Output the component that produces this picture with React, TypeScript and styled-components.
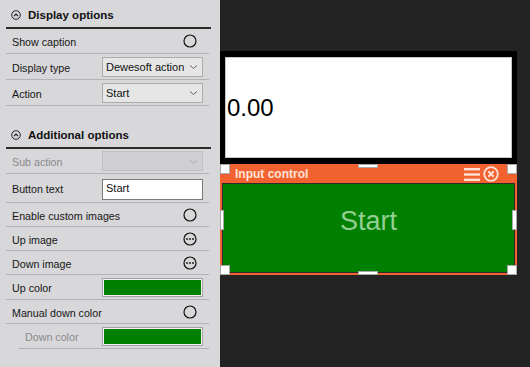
import React from "react";
import styled, { createGlobalStyle } from "styled-components";

const Global = createGlobalStyle`
  html, body { margin: 0; padding: 0; }
  body { width: 530px; height: 367px; overflow: hidden; background: #232323; }
  #root { width: 530px; height: 367px; }
`;

const Page = styled.div`
  display: flex;
  width: 530px;
  height: 367px;
  font-family: "Liberation Sans", Arial, sans-serif;
`;

const LeftPanel = styled.div`
  width: 220px;
  flex: none;
  background: #d8d7da;
  padding: 0 9px 0 6px;
  box-sizing: border-box;
  display: flex;
  flex-direction: column;
`;

const SectionHeader = styled.div<{ $top?: number }>`
  margin-top: ${(p) => p.$top ?? 0}px;
  border-bottom: 2px solid #2a2a2a;
  display: flex;
  align-items: center;
  gap: 7px;
  padding: 3px 0 0 5px;
  height: 24px;
  font-weight: bold;
  font-size: 11.5px;
  color: #111;
`;

const Row = styled.div<{ $h: number; $indent?: number }>`
  display: grid;
  grid-template-columns: ${(p) => 90 - (p.$indent ?? 0)}px 101px;
  align-items: center;
  height: ${(p) => p.$h}px;
  margin: 0 2px 0 ${(p) => p.$indent ?? 0}px;
  padding-left: 6px;
  border-bottom: 1px solid #b3b2b5;
  box-sizing: border-box;
`;

const Label = styled.span<{ $disabled?: boolean }>`
  font-size: 10.7px;
  padding-top: 2px;
  color: ${(p) => (p.$disabled ? "#8a898c" : "#161616")};
  white-space: nowrap;
`;

const SelectBox = styled.div<{ $disabled?: boolean }>`
  height: 20px;
  box-sizing: border-box;
  background: ${(p) => (p.$disabled ? "#cfced1" : "#e6e6e6")};
  border: 1px solid ${(p) => (p.$disabled ? "#c2c1c4" : "#acacac")};
  display: flex;
  align-items: center;
  justify-content: space-between;
  padding: 1px 4px 0 3px;
  font-size: 11px;
  color: #111;
`;

const TextInput = styled.div`
  height: 21px;
  box-sizing: border-box;
  background: #fff;
  border: 1px solid #7a7a7a;
  padding: 1px 3px 0;
  font-size: 11px;
  color: #111;
  line-height: 15px;
  align-self: start;
  margin-top: 5px;
`;

const Swatch = styled.div<{ $color: string }>`
  height: 19px;
  box-sizing: border-box;
  border: 1px solid #a2a1a4;
  padding: 1px;
  background: #f2f2f2;
  &::after {
    content: "";
    display: block;
    height: 100%;
    background: ${(p) => p.$color};
  }
`;

const IconSlot = styled.div`
  justify-self: end;
  margin-right: 6px;
  display: flex;
  align-items: center;
`;

const Canvas = styled.div`
  flex: 1;
  position: relative;
  background: #232323;
`;

const ValueWidget = styled.div`
  position: absolute;
  left: 0;
  top: 51px;
  width: 297px;
  height: 113px;
  background: #000;
  padding: 6px 5px;
  box-sizing: border-box;
  display: flex;
`;

const ValueInner = styled.div`
  flex: 1;
  background: #fff;
  border: 1px solid #c6c6c6;
  display: flex;
  align-items: center;
  padding-left: 1px;
  font-size: 24px;
  color: #000;
`;

const ControlWidget = styled.div`
  position: absolute;
  left: 0;
  top: 164px;
  width: 297px;
  height: 111px;
  background: #f26231;
  display: flex;
  flex-direction: column;
`;

const WidgetHeader = styled.div`
  height: 19px;
  flex: none;
  display: flex;
  align-items: center;
  justify-content: space-between;
  padding: 0 18px 0 15px;
  font-size: 12px;
  font-weight: bold;
  color: #fde3d8;
`;

const HeaderIcons = styled.div`
  display: flex;
  align-items: center;
  gap: 3px;
`;

const WidgetBody = styled.div`
  flex: 1;
  padding: 0 2px 2px 2px;
  display: flex;
`;

const GreenButton = styled.div`
  flex: 1;
  background: #007f00;
  border: 1px solid #2b2b2b;
  display: flex;
  align-items: center;
  justify-content: center;
  font-size: 27px;
  color: #93cf93;
  padding-bottom: 14px;
`;

const Handle = styled.div<{ $x: number; $y: number; $w: number; $h: number }>`
  position: absolute;
  left: ${(p) => p.$x}px;
  top: ${(p) => p.$y}px;
  width: ${(p) => p.$w}px;
  height: ${(p) => p.$h}px;
  background: #fff;
  border: 1px solid #a9a9a9;
  box-sizing: border-box;
`;

const CollapseIcon = () => (
  <svg width="10" height="10" viewBox="0 0 10 10">
    <circle cx="5" cy="5" r="4.3" fill="none" stroke="#222" strokeWidth="1" />
    <path d="M3 6 L5 4 L7 6" fill="none" stroke="#222" strokeWidth="1.1" />
  </svg>
);

const Chevron = ({ color = "#666" }: { color?: string }) => (
  <svg width="9" height="6" viewBox="0 0 9 6">
    <path d="M1 1.5 L4.5 4.5 L8 1.5" fill="none" stroke={color} strokeWidth="1" />
  </svg>
);

const RadioCircle = () => (
  <svg width="14" height="14" viewBox="0 0 14 14">
    <circle cx="7" cy="7" r="6" fill="none" stroke="#111" strokeWidth="1.2" />
  </svg>
);

const EllipsisCircle = () => (
  <svg width="14" height="14" viewBox="0 0 14 14">
    <circle cx="7" cy="7" r="6" fill="none" stroke="#111" strokeWidth="1.2" />
    <circle cx="4" cy="7" r="0.9" fill="#111" />
    <circle cx="7" cy="7" r="0.9" fill="#111" />
    <circle cx="10" cy="7" r="0.9" fill="#111" />
  </svg>
);

const MenuIcon = () => (
  <svg width="16" height="14" viewBox="0 0 16 14">
    <rect x="0" y="1" width="16" height="2.4" fill="#fde3d8" />
    <rect x="0" y="6.3" width="16" height="2.4" fill="#fde3d8" />
    <rect x="0" y="11.6" width="16" height="2.4" fill="#fde3d8" />
  </svg>
);

const CloseIcon = () => (
  <svg width="16" height="16" viewBox="0 0 16 16">
    <circle cx="8" cy="8" r="6.8" fill="none" stroke="#fde3d8" strokeWidth="1.8" />
    <path d="M5.3 5.3 L10.7 10.7 M10.7 5.3 L5.3 10.7" stroke="#fde3d8" strokeWidth="2" />
  </svg>
);

export default function App() {
  return (
    <>
      <Global />
      <Page>
        <LeftPanel>
          <SectionHeader>
            <CollapseIcon />
            Display options
          </SectionHeader>
          <Row $h={25}>
            <Label>Show caption</Label>
            <IconSlot><RadioCircle /></IconSlot>
          </Row>
          <Row $h={26}>
            <Label>Display type</Label>
            <SelectBox>Dewesoft action<Chevron /></SelectBox>
          </Row>
          <Row $h={26}>
            <Label>Action</Label>
            <SelectBox>Start<Chevron /></SelectBox>
          </Row>

          <SectionHeader $top={14}>
            <CollapseIcon />
            Additional options
          </SectionHeader>
          <Row $h={25}>
            <Label $disabled>Sub action</Label>
            <SelectBox $disabled><span /><Chevron color="#a8a8a8" /></SelectBox>
          </Row>
          <Row $h={29}>
            <Label>Button text</Label>
            <TextInput>Start</TextInput>
          </Row>
          <Row $h={24}>
            <Label>Enable custom images</Label>
            <IconSlot><RadioCircle /></IconSlot>
          </Row>
          <Row $h={24}>
            <Label>Up image</Label>
            <IconSlot><EllipsisCircle /></IconSlot>
          </Row>
          <Row $h={24}>
            <Label>Down image</Label>
            <IconSlot><EllipsisCircle /></IconSlot>
          </Row>
          <Row $h={25}>
            <Label>Up color</Label>
            <Swatch $color="#008000" />
          </Row>
          <Row $h={24}>
            <Label>Manual down color</Label>
            <IconSlot><RadioCircle /></IconSlot>
          </Row>
          <Row $h={25} $indent={13}>
            <Label $disabled>Down color</Label>
            <Swatch $color="#008000" />
          </Row>
        </LeftPanel>

        <Canvas>
          <ValueWidget>
            <ValueInner>0.00</ValueInner>
          </ValueWidget>
          <ControlWidget>
            <WidgetHeader>
              <span>Input control</span>
              <HeaderIcons>
                <MenuIcon />
                <CloseIcon />
              </HeaderIcons>
            </WidgetHeader>
            <WidgetBody>
              <GreenButton>Start</GreenButton>
            </WidgetBody>
          </ControlWidget>
          <Handle $x={0} $y={164} $w={10} $h={10} />
          <Handle $x={287} $y={164} $w={10} $h={10} />
          <Handle $x={0} $y={265} $w={10} $h={10} />
          <Handle $x={287} $y={265} $w={10} $h={10} />
          <Handle $x={138} $y={164} $w={20} $h={4} />
          <Handle $x={138} $y={271} $w={20} $h={4} />
          <Handle $x={0} $y={210} $w={4} $h={20} />
          <Handle $x={292} $y={210} $w={5} $h={20} />
        </Canvas>
      </Page>
    </>
  );
}
